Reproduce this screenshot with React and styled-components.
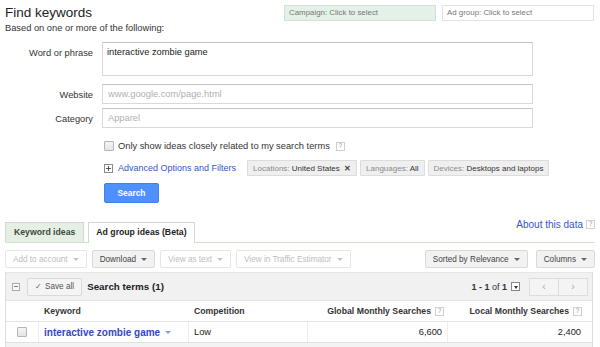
import React from 'react'
import styled, { createGlobalStyle } from 'styled-components'

const GlobalStyle = createGlobalStyle`
  html, body { margin: 0; padding: 0; background: #fff; }
  body {
    font-family: "Liberation Sans", Arial, sans-serif;
    font-size: 9.3px;
    color: #222;
  }
  * { box-sizing: border-box; }
`

const LINK = '#3656c9'

export default function App() {
  return (
    <Page>
      <GlobalStyle />
      <Header>
        <div>
          <Title>Find keywords</Title>
          <Subtitle>Based on one or more of the following:</Subtitle>
        </div>
        <Pickers>
          <Picker $active>Campaign: Click to select</Picker>
          <Picker>Ad group: Click to select</Picker>
        </Pickers>
      </Header>

      <FieldRow $mt={8}>
        <Label $pad={5}>Word or phrase</Label>
        <TextArea defaultValue="interactive zombie game" />
      </FieldRow>
      <FieldRow $mt={8}>
        <Label $pad={5}>Website</Label>
        <Input placeholder="www.google.com/page.html" />
      </FieldRow>
      <FieldRow $mt={4}>
        <Label $pad={5}>Category</Label>
        <Input placeholder="Apparel" />
      </FieldRow>

      <Options>
        <CheckLine>
          <Check />
          <span>Only show ideas closely related to my search terms</span>
          <Help>?</Help>
        </CheckLine>
        <AdvancedLine>
          <PlusBox />
          <Link>Advanced Options and Filters</Link>
          <Chips>
            <Chip>
              <ChipKey>Locations:</ChipKey> United States <ChipX>✕</ChipX>
            </Chip>
            <Chip>
              <ChipKey>Languages:</ChipKey> All
            </Chip>
            <Chip>
              <ChipKey>Devices:</ChipKey> Desktops and laptops
            </Chip>
          </Chips>
        </AdvancedLine>
        <SearchButton>Search</SearchButton>
      </Options>

      <TabBar>
        <Tab>Keyword ideas</Tab>
        <Tab $active>Ad group ideas (Beta)</Tab>
        <About>
          <AboutLink>About this data</AboutLink>
          <Help>?</Help>
        </About>
      </TabBar>

      <Toolbar>
        <ToolGroup $gap={5}>
          <ToolButton disabled>Add to account<Caret /></ToolButton>
          <ToolButton>Download<Caret /></ToolButton>
          <ToolButton disabled>View as text<Caret /></ToolButton>
          <ToolButton disabled>View in Traffic Estimator<Caret /></ToolButton>
        </ToolGroup>
        <ToolGroup $gap={8}>
          <ToolButton>Sorted by Relevance<Caret /></ToolButton>
          <ToolButton>Columns<Caret /></ToolButton>
        </ToolGroup>
      </Toolbar>

      <Table>
        <TableBar>
          <MinusBox />
          <SaveAll><span>✓</span>Save all</SaveAll>
          <BarTitle>Search terms (1)</BarTitle>
          <PageInfo>
            <b>1 - 1</b> of <b>1</b>
          </PageInfo>
          <PageMenu />
          <Pager>
            <PagerBtn>‹</PagerBtn>
            <PagerBtn>›</PagerBtn>
          </Pager>
        </TableBar>
        <HeadRow>
          <Cell />
          <HeadCell>Keyword</HeadCell>
          <HeadCell>Competition</HeadCell>
          <HeadCell $right>Global Monthly Searches <Help>?</Help></HeadCell>
          <HeadCell $right $last>Local Monthly Searches <Help>?</Help></HeadCell>
        </HeadRow>
        <DataRow>
          <Cell $center $line><Check /></Cell>
          <Cell $line>
            <KeywordLink>interactive zombie game</KeywordLink>
            <Caret $color="#8aa0dd" />
          </Cell>
          <Cell $line>Low</Cell>
          <Cell $right $line>6,600</Cell>
          <Cell $right $last>2,400</Cell>
        </DataRow>
        <TableFoot />
      </Table>
    </Page>
  )
}

// STYLES
const Page = styled.div`
  width: 600px;
  height: 347px;
  overflow: hidden;
  padding: 0 5px;
`

const Header = styled.header`
  display: flex;
  justify-content: space-between;
  align-items: flex-start;
  padding-top: 5px;
`

const Title = styled.h1`
  margin: 0;
  font-size: 13.5px;
  line-height: 16px;
  font-weight: normal;
  color: #222;
`

const Subtitle = styled.div`
  margin-top: 1px;
  line-height: 12px;
  color: #333;
`

const Pickers = styled.div`
  display: flex;
  gap: 6px;
  margin-right: 1px;
`

const Picker = styled.div`
  width: 152px;
  height: 16px;
  padding-left: 4px;
  border: 1px solid ${p => (p.$active ? '#d2e2d6' : '#e2e2e2')};
  background: ${p => (p.$active ? '#e4f1e8' : '#fff')};
  color: #777;
  font-size: 7.9px;
  line-height: 14px;
`

const FieldRow = styled.div`
  display: flex;
  align-items: flex-start;
  gap: 9px;
  margin-top: ${p => p.$mt}px;
`

const Label = styled.label`
  width: 88px;
  flex: none;
  text-align: right;
  color: #333;
  line-height: 12px;
  padding-top: ${p => p.$pad}px;
`

const fieldBase = `
  width: 431px;
  border: 1px solid #d9d9d9;
  border-top-color: #c4c4c4;
  font-family: "Liberation Sans", Arial, sans-serif;
  font-size: 9.3px;
  color: #222;
  outline: none;
  margin: 0;
  &::placeholder { color: #b0b0b0; }
`

const TextArea = styled.textarea`
  ${fieldBase}
  height: 34px;
  padding: 3px 4px;
  line-height: 12px;
  resize: none;
`

const Input = styled.input`
  ${fieldBase}
  height: 20px;
  padding: 0 5px;
`

const Options = styled.div`
  margin-left: 99px;
  display: flex;
  flex-direction: column;
  align-items: flex-start;
`

const CheckLine = styled.div`
  display: flex;
  align-items: center;
  gap: 4px;
  height: 12px;
  margin-top: 12px;
  color: #333;
  & > span:nth-child(2) { margin-right: 2px; }
`

const Check = styled.span`
  display: inline-block;
  width: 10px;
  height: 10px;
  border: 1px solid #b5b5b5;
  border-radius: 1px;
  background: linear-gradient(#f4f4f4, #e4e4e4);
`

const Help = styled.span`
  display: inline-flex;
  align-items: center;
  justify-content: center;
  width: 9px;
  height: 9px;
  border: 1px solid #d0d0d0;
  color: #999;
  font-size: 6.5px;
  font-weight: normal;
  line-height: 1;
  vertical-align: middle;
`

const AdvancedLine = styled.div`
  display: flex;
  align-items: center;
  margin-top: 8px;
  height: 16px;
`

const PlusBox = styled.span`
  position: relative;
  width: 9px;
  height: 9px;
  border: 1px solid #8a8a8a;
  margin-right: 5px;
  &::before, &::after {
    content: '';
    position: absolute;
    background: #555;
  }
  &::before { left: 1px; right: 1px; top: 3px; height: 1px; }
  &::after { top: 1px; bottom: 1px; left: 3px; width: 1px; }
`

const Link = styled.a`
  color: ${LINK};
  font-size: 9px;
  cursor: pointer;
`

const Chips = styled.div`
  display: flex;
  gap: 3px;
  margin-left: 11px;
`

const Chip = styled.span`
  display: inline-flex;
  align-items: center;
  height: 16px;
  padding: 0 5px;
  background: #efefef;
  border: 1px solid #dcdcdc;
  border-radius: 1px;
  color: #333;
  font-size: 8px;
  white-space: pre;
`

const ChipKey = styled.span`
  color: #8a8a8a;
`

const ChipX = styled.span`
  margin-left: 2px;
  font-weight: bold;
  color: #444;
  font-size: 7.5px;
`

const SearchButton = styled.button`
  margin-top: 7px;
  width: 55px;
  height: 20px;
  padding: 0;
  border: 1px solid #3d82f0;
  border-radius: 2px;
  background: #4d90fe;
  color: #fff;
  font-family: inherit;
  font-weight: bold;
  font-size: 8.4px;
`

const TabBar = styled.div`
  display: flex;
  align-items: flex-end;
  height: 21px;
  margin-top: 19px;
  border-bottom: 1px solid #d3e0d1;
`

const Tab = styled.div`
  height: ${p => (p.$active ? 21 : 20)}px;
  margin-bottom: ${p => (p.$active ? -1 : 0)}px;
  margin-right: 4px;
  padding: 0 ${p => (p.$active ? 7 : 8)}px;
  border: 1px solid #cfdccd;
  border-bottom: none;
  background: ${p => (p.$active ? '#fff' : '#e6efe4')};
  color: ${p => (p.$active ? '#222' : '#3d4a3d')};
  font-weight: bold;
  font-size: 8.7px;
  line-height: 19px;
`

const About = styled.div`
  margin-left: auto;
  align-self: flex-start;
  display: flex;
  align-items: center;
  gap: 3px;
  margin-top: -3px;
`

const AboutLink = styled.a`
  color: ${LINK};
  font-size: 10px;
`

const Toolbar = styled.div`
  display: flex;
  justify-content: space-between;
  margin-top: 7px;
`

const ToolGroup = styled.div`
  display: flex;
  gap: ${p => p.$gap}px;
`

const ToolButton = styled.button`
  display: inline-flex;
  align-items: center;
  height: 18px;
  padding: 0 7px;
  border: 1px solid ${p => (p.disabled ? '#e6e6e6' : '#d9d9d9')};
  border-radius: 2px;
  background: ${p => (p.disabled ? '#fff' : '#f2f2f2')};
  color: ${p => (p.disabled ? '#bdbdbd' : '#444')};
  font-family: inherit;
  font-size: 8.2px;
  & > span { border-top-color: ${p => (p.disabled ? '#c8c8c8' : '#666')}; }
`

const Caret = styled.span`
  display: inline-block;
  margin-left: 5px;
  width: 0;
  height: 0;
  border-left: 3px solid transparent;
  border-right: 3px solid transparent;
  border-top: 3px solid ${p => p.$color || '#666'};
  vertical-align: middle;
`

const Table = styled.div`
  width: 588px;
  margin-top: 4px;
  border-left: 1px solid #dedede;
  border-right: 1px solid #dedede;
`

const TableBar = styled.div`
  display: flex;
  align-items: center;
  height: 28px;
  padding: 0 4px 0 6px;
  background: #f1f1f1;
  border-top: 1px solid #e6e6e6;
`

const MinusBox = styled.span`
  position: relative;
  width: 8px;
  height: 8px;
  border: 1px solid #aaa;
  background: #fafafa;
  &::after {
    content: '';
    position: absolute;
    left: 1px;
    right: 1px;
    top: 2.5px;
    height: 1px;
    background: #777;
  }
`

const SaveAll = styled.button`
  display: inline-flex;
  align-items: center;
  gap: 3px;
  height: 18px;
  margin-left: 7px;
  padding: 0 7px;
  border: 1px solid #dadada;
  border-radius: 2px;
  background: #f4f4f4;
  color: #555;
  font-family: inherit;
  font-size: 8.2px;
  & > span { font-size: 8px; color: #666; }
`

const BarTitle = styled.span`
  margin-left: 5px;
  font-weight: bold;
  font-size: 9.8px;
  color: #222;
`

const PageInfo = styled.span`
  margin-left: auto;
  font-size: 9px;
  color: #333;
`

const PageMenu = styled.span`
  position: relative;
  width: 9px;
  height: 9px;
  margin-left: 4px;
  border: 1px solid #888;
  background: #fff;
  &::after {
    content: '';
    position: absolute;
    left: 1.5px;
    top: 2.5px;
    border-left: 2.5px solid transparent;
    border-right: 2.5px solid transparent;
    border-top: 3px solid #333;
  }
`

const Pager = styled.div`
  display: flex;
  margin-left: 10px;
`

const PagerBtn = styled.span`
  display: inline-flex;
  align-items: center;
  justify-content: center;
  width: 30px;
  height: 18px;
  border: 1px solid #dddddd;
  margin-left: -1px;
  background: #f4f4f4;
  color: #aaa;
  font-size: 10px;
`

const rowGrid = `
  display: grid;
  grid-template-columns: 33px 150px 119px 140px 144px;
`

const HeadRow = styled.div`
  ${rowGrid}
  height: 22px;
  background: #fff;
  border-top: 1px solid #e6e6e6;
  border-bottom: 1px solid #e3e3e3;
`

const Cell = styled.div`
  display: flex;
  align-items: center;
  justify-content: ${p => (p.$center ? 'center' : p.$right ? 'flex-end' : 'flex-start')};
  padding: 0 ${p => (p.$last ? 11 : 5)}px 0 5px;
  border-right: ${p => (p.$line ? '1px solid #ececec' : 'none')};
  color: #222;
`

const HeadCell = styled(Cell)`
  gap: 4px;
  font-weight: bold;
  font-size: 8.7px;
  color: #333;
  padding-right: ${p => (p.$last ? 10 : 4)}px;
`

const DataRow = styled.div`
  ${rowGrid}
  height: 21px;
  border-bottom: 1px solid #e0e0e0;
`

const KeywordLink = styled.a`
  color: #3348c4;
  font-weight: bold;
  font-size: 10px;
`

const TableFoot = styled.div`
  height: 20px;
  background: #f3f3f3;
`
